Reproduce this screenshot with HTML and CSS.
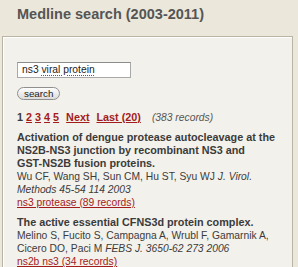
FILE: index.html
```html
<!DOCTYPE html>
<html lang="en">
  <head>
    <meta charset="UTF-8" />
    <title>Medline search</title>
    <link rel="stylesheet" href="styles.css">
  </head>
  <body>
    <h1 class="heading">Medline search (2003-2011)</h1>
    <div class="panel">
      <form class="search" onsubmit="return false">
        <div class="query">ns3 <span class="misspelt">viral protein</span></div>
        <button class="search-btn">search</button>
      </form>

      <div class="pager">
        <span class="current">1</span>
        <a href="#">2</a>
        <a href="#">3</a>
        <a href="#">4</a>
        <a href="#">5</a>
        <a href="#" class="step">Next</a>
        <a href="#" class="step">Last (20)</a>
        <span class="count">(383 records)</span>
      </div>

      <div class="record">
        <div class="record-title">Activation of dengue protease autocleavage at the NS2B-NS3 junction by recombinant NS3 and <span class="nowrap">GST-NS2B</span> fusion proteins.</div>
        <div>Wu CF, Wang SH, Sun CM, Hu ST, Syu WJ <i>J. Virol. Methods 45-54 114 2003</i></div>
        <a href="#">ns3 protease (89 records)</a>
      </div>

      <div class="record">
        <div class="record-title">The active essential CFNS3d protein complex.</div>
        <div>Melino S, Fucito S, Campagna A, Wrubl F, Gamarnik A, Cicero DO, Paci M <i>FEBS J. 3650-62 273 2006</i></div>
        <a href="#">ns2b ns3 (34 records)</a>
      </div>
    </div>
  </body>
</html>
```

FILE: styles.css
```css
* {
  box-sizing: border-box;
}

html,
body {
  background-color: #ebe7da;
  color: #3b3b3b;
  font-family: "Liberation Sans", Arial, sans-serif;
  height: 100%;
  margin: 0;
  overflow: hidden;
}

body {
  display: flex;
  flex-direction: column;
  padding: 0 5px 0 2px;
}

.heading {
  color: #555;
  font-size: 14.5px;
  font-weight: bold;
  line-height: 16px;
  margin: 0;
  padding: 6px 0 14px 15px;
}

.panel {
  background-color: #f3f1eb;
  border: 1px solid #b9b4a4;
  border-bottom: none;
  box-shadow: inset 1px 1px 0 #ffffff;
  flex-grow: 1;
  font-size: 10.3px;
  line-height: 13px;
  padding: 25px 0 0 14px;
}

.search {
  display: flex;
  flex-direction: column;
  align-items: flex-start;
  gap: 9px;
}

.query {
  background-color: #fff;
  border: 1px solid #a9a9a9;
  border-top-color: #8c8c8c;
  color: #222;
  font-size: 10.3px;
  height: 16px;
  line-height: 14px;
  padding: 0 4px;
  width: 114px;
}

.misspelt {
  text-decoration: underline dotted #d22;
  text-underline-offset: 2px;
}

.search-btn {
  background: linear-gradient(#fdfdfd, #dcdcdc);
  border: 1px solid #8f8f8f;
  border-radius: 7px;
  color: #222;
  font-family: "Liberation Sans", Arial, sans-serif;
  font-size: 9.8px;
  height: 13px;
  line-height: 10px;
  padding: 0 6px;
}

.pager {
  font-size: 10.8px;
  font-weight: bold;
  margin-top: 11px;
}

.pager a {
  color: #a31c1c;
}

.pager .step {
  margin-left: 4px;
}

.count {
  color: #555;
  font-size: 10.3px;
  font-style: italic;
  font-weight: normal;
  margin-left: 8px;
}

.record {
  margin-top: 7px;
  width: 261px;
}

.record-title {
  font-size: 10.8px;
  font-weight: bold;
}

.nowrap {
  white-space: nowrap;
}

.record a {
  color: #a31c1c;
}
```
